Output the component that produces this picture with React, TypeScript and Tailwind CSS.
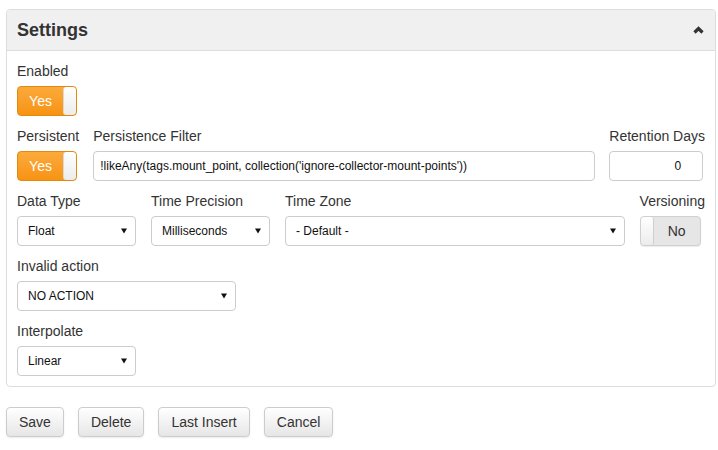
import React from 'react';

const font = { fontFamily: '"Liberation Sans", Arial, sans-serif' };

function Toggle({ on }: { on: boolean }) {
  if (on) {
    return (
      <div className="flex h-[30px] w-[60px] overflow-hidden rounded-[4px] border border-[#e08a12] bg-gradient-to-b from-[#fbaa3a] to-[#f7930f]">
        <div className="flex flex-1 items-center justify-center text-[14px] text-white">Yes</div>
        <div className="w-[13px] rounded-[3px] border-l border-[#d9d9d9] bg-gradient-to-b from-white to-[#ececec]" />
      </div>
    );
  }
  return (
    <div className="flex h-[30px] w-[61px] overflow-hidden rounded-[4px] border border-[#d0d0d0] bg-[#e6e6e6] shadow-[0_1px_1px_rgba(0,0,0,0.08)]">
      <div className="w-[13px] rounded-[3px] border-r border-[#cfcfcf] bg-gradient-to-b from-white to-[#ececec]" />
      <div className="flex flex-1 items-center justify-center text-[14px] text-[#333]">No</div>
    </div>
  );
}

function Select({ value, width }: { value: string; width?: string }) {
  return (
    <div
      className={`flex h-[30px] items-center justify-between rounded-[4px] border border-[#cccccc] bg-white pl-[10px] pr-[8px] text-[12px] text-[#111] ${width ?? ''}`}
    >
      <span>{value}</span>
      <svg width="6" height="6" viewBox="0 0 6 6">
        <polygon points="0,0.5 6,0.5 3,5.5" fill="#111" />
      </svg>
    </div>
  );
}

function Label({ children }: { children: React.ReactNode }) {
  return <div className="mb-[5px] h-[20px] text-[14px] leading-[20px] text-[#333] whitespace-nowrap">{children}</div>;
}

function Button({ children }: { children: React.ReactNode }) {
  return (
    <button className="h-[30px] rounded-[4px] border border-[#cccccc] bg-gradient-to-b from-white to-[#e6e6e6] px-[12px] text-[14px] text-[#333] shadow-[0_1px_2px_rgba(0,0,0,0.08)]">
      {children}
    </button>
  );
}

export default function App() {
  return (
    <div className="h-[450px] w-[718px] bg-white pl-[6px] pr-[2px] pt-[9px]" style={font}>
      <div className="rounded-[4px] border border-[#dddddd]">
        <div className="flex h-[41px] items-center justify-between rounded-t-[4px] border-b border-[#dddddd] bg-[#f0f0f0] pl-[10px] pr-[11px]">
          <span className="text-[18px] font-bold text-[#333]">Settings</span>
          <svg width="11" height="8" viewBox="0 0 11 8">
            <polyline points="1.5,6.5 5.5,2.5 9.5,6.5" fill="none" stroke="#333" strokeWidth="3.2" />
          </svg>
        </div>

        <div className="px-[10px] py-[10px]">
          <div className="mb-[10px]">
            <Label>Enabled</Label>
            <Toggle on />
          </div>

          <div className="mb-[10px] flex gap-[14px]">
            <div>
              <Label>Persistent</Label>
              <Toggle on />
            </div>
            <div className="flex-1">
              <Label>Persistence Filter</Label>
              <div className="flex h-[30px] items-center rounded-[4px] border border-[#cccccc] bg-white px-[6px] text-[12px] text-[#111]">
                !likeAny(tags.mount_point, collection('ignore-collector-mount-points'))
              </div>
            </div>
            <div>
              <Label>Retention Days</Label>
              <div className="flex h-[30px] w-[94px] items-center justify-end rounded-[4px] border border-[#cccccc] bg-white pr-[21px] text-[12px] text-[#111]">
                0
              </div>
            </div>
          </div>

          <div className="mb-[10px] flex gap-[15px]">
            <div className="w-[119px]">
              <Label>Data Type</Label>
              <Select value="Float" />
            </div>
            <div className="w-[119px]">
              <Label>Time Precision</Label>
              <Select value="Milliseconds" />
            </div>
            <div className="flex-1">
              <Label>Time Zone</Label>
              <Select value="- Default -" />
            </div>
            <div>
              <Label>Versioning</Label>
              <Toggle on={false} />
            </div>
          </div>

          <div className="mb-[10px]">
            <Label>Invalid action</Label>
            <Select value="NO ACTION" width="w-[219px]" />
          </div>

          <div>
            <Label>Interpolate</Label>
            <Select value="Linear" width="w-[119px]" />
          </div>
        </div>
      </div>

      <div className="mt-[20px] flex gap-[14px]">
        <Button>Save</Button>
        <Button>Delete</Button>
        <Button>Last Insert</Button>
        <Button>Cancel</Button>
      </div>
    </div>
  );
}
